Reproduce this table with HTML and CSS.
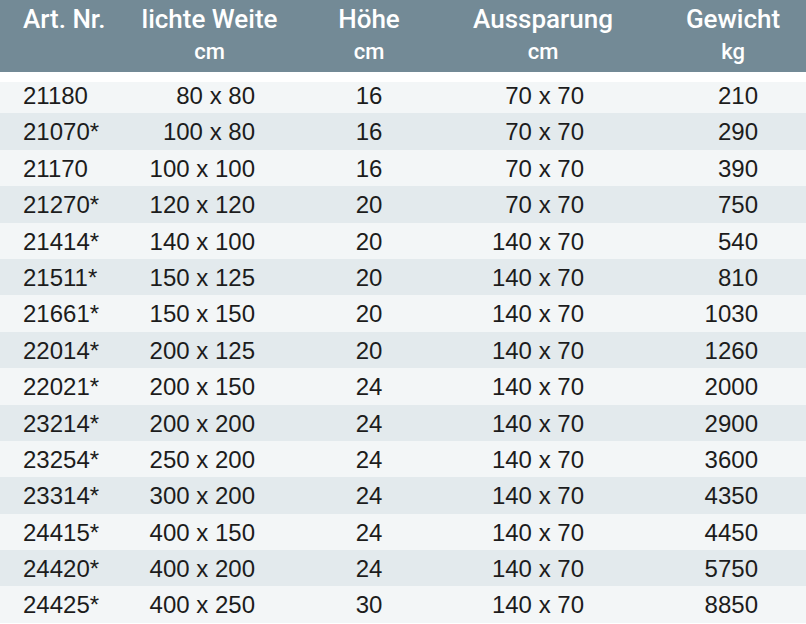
FILE: index.html
```html
<!DOCTYPE html>
<html lang="de">
<head>
<meta charset="utf-8">
<title>Tabelle</title>
<link rel="stylesheet" href="styles.css">
</head>
<body>
<div class="table">
  <div class="head">
    <div class="hc c1"><div class="t1">Art. Nr.</div></div>
    <div class="hc c2"><div class="t1">lichte Weite</div><div class="t2">cm</div></div>
    <div class="hc c3"><div class="t1">Höhe</div><div class="t2">cm</div></div>
    <div class="hc c4"><div class="t1">Aussparung</div><div class="t2">cm</div></div>
    <div class="hc c5"><div class="t1">Gewicht</div><div class="t2">kg</div></div>
  </div>
  <div class="body">
    <div class="row"><div class="c1">21180</div><div class="c2">80 x 80</div><div class="c3">16</div><div class="c4">70 x 70</div><div class="c5">210</div></div>
    <div class="row"><div class="c1">21070*</div><div class="c2">100 x 80</div><div class="c3">16</div><div class="c4">70 x 70</div><div class="c5">290</div></div>
    <div class="row"><div class="c1">21170</div><div class="c2">100 x 100</div><div class="c3">16</div><div class="c4">70 x 70</div><div class="c5">390</div></div>
    <div class="row"><div class="c1">21270*</div><div class="c2">120 x 120</div><div class="c3">20</div><div class="c4">70 x 70</div><div class="c5">750</div></div>
    <div class="row"><div class="c1">21414*</div><div class="c2">140 x 100</div><div class="c3">20</div><div class="c4">140 x 70</div><div class="c5">540</div></div>
    <div class="row"><div class="c1">21511*</div><div class="c2">150 x 125</div><div class="c3">20</div><div class="c4">140 x 70</div><div class="c5">810</div></div>
    <div class="row"><div class="c1">21661*</div><div class="c2">150 x 150</div><div class="c3">20</div><div class="c4">140 x 70</div><div class="c5">1030</div></div>
    <div class="row"><div class="c1">22014*</div><div class="c2">200 x 125</div><div class="c3">20</div><div class="c4">140 x 70</div><div class="c5">1260</div></div>
    <div class="row"><div class="c1">22021*</div><div class="c2">200 x 150</div><div class="c3">24</div><div class="c4">140 x 70</div><div class="c5">2000</div></div>
    <div class="row"><div class="c1">23214*</div><div class="c2">200 x 200</div><div class="c3">24</div><div class="c4">140 x 70</div><div class="c5">2900</div></div>
    <div class="row"><div class="c1">23254*</div><div class="c2">250 x 200</div><div class="c3">24</div><div class="c4">140 x 70</div><div class="c5">3600</div></div>
    <div class="row"><div class="c1">23314*</div><div class="c2">300 x 200</div><div class="c3">24</div><div class="c4">140 x 70</div><div class="c5">4350</div></div>
    <div class="row"><div class="c1">24415*</div><div class="c2">400 x 150</div><div class="c3">24</div><div class="c4">140 x 70</div><div class="c5">4450</div></div>
    <div class="row"><div class="c1">24420*</div><div class="c2">400 x 200</div><div class="c3">24</div><div class="c4">140 x 70</div><div class="c5">5750</div></div>
    <div class="row"><div class="c1">24425*</div><div class="c2">400 x 250</div><div class="c3">30</div><div class="c4">140 x 70</div><div class="c5">8850</div></div>
  </div>
</div>
</body>
</html>
```
FILE: styles.css
```css
html, body {
  margin: 0;
  padding: 0;
  background: #ffffff;
}
body {
  font-family: "Liberation Sans", Arial, sans-serif;
  width: 806px;
  height: 624px;
  overflow: hidden;
}
.table {
  width: 806px;
}
.head, .row {
  display: grid;
  grid-template-columns: 120px 188px 122px 226px 150px;
}
.head {
  height: 72px;
  box-sizing: border-box;
  padding-top: 4px;
  background: #738a96;
  color: #ffffff;
  font-family: Roboto, "Liberation Sans", sans-serif;
  font-weight: 500;
}
.hc {
  text-align: center;
  white-space: nowrap;
}
.hc .t1 {
  font-size: 26px;
  line-height: 30px;
}
.hc .t2 {
  font-size: 22px;
  line-height: 36px;
}
.hc.c1 { text-align: left; padding-left: 23px; }
.hc.c2 { padding-right: 9px; }
.hc.c5 { padding-left: 4px; }

.body {
  padding-top: 5px;
}
.row {
  height: 36.4px;
  box-sizing: border-box;
  padding-top: 2px;
  font-size: 24px;
  line-height: 34.4px;
  color: #1c1c1c;
  white-space: nowrap;
}
.row:nth-child(odd) { background: #f3f6f7; }
.row:nth-child(even) { background: #e3eaed; }
.row:first-child {
  background: linear-gradient(#ffffff 0 5px, #f3f6f7 5px);
}
.row .c1 { padding-left: 23px; }
.row .c2 { text-align: right; padding-right: 53px; }
.row .c3 { text-align: center; }
.row .c4 { text-align: right; padding-right: 72px; }
.row .c5 { text-align: right; padding-right: 48px; }
```
